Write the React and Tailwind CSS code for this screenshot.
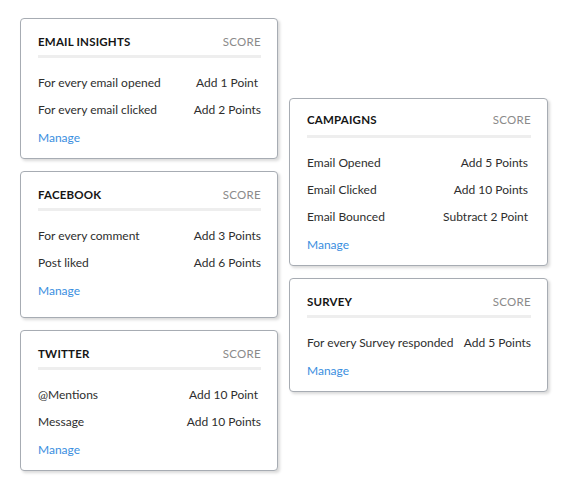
import React from "react";

function Card({ title, rows, extraBottom, wide, rowPad, tightTitle }) {
  return (
    <div
      className={`${wide ? "w-[259px]" : "w-[258px]"} bg-white border border-[#a7acb3] rounded-[4px] shadow-[2px_2px_3px_rgba(0,0,0,0.15)] pl-[17px] pr-[16px] ${
        tightTitle ? "pt-[13px]" : "pt-[15px]"
      } ${extraBottom ? "pb-[13px]" : "pb-[7px]"}`}
    >
      <div className="flex justify-between items-center h-[16px]">
        <span className="text-[11.5px] font-bold text-[#151515] tracking-[0.2px]">{title}</span>
        <span className="text-[11.5px] text-[#8a8a8a] tracking-[0.3px]">SCORE</span>
      </div>
      <div className={`${tightTitle ? "mt-[7px]" : "mt-[5px]"} h-[3px] bg-[#eeeeee]`} />
      <div className="mt-[11px]">
        {rows.map(([l, r, shift], i) => (
          <div
            key={i}
            className={`flex justify-between items-center h-[27px] text-[12px] text-[#2e2e2e] ${
              rowPad ? "pr-[3px]" : ""
            }`}
          >
            <span>{l}</span>
            <span className={shift ? "mr-[3px]" : ""}>{r}</span>
          </div>
        ))}
        <div className="mt-[1px] flex items-center h-[27px] text-[12px] text-[#3a8ee0]">Manage</div>
      </div>
    </div>
  );
}

export default function App() {
  return (
    <div
      className="min-h-[492px] bg-white pl-[20px] pt-[18px] flex gap-[11px] items-start"
      style={{ fontFamily: "Lato, 'Noto Sans', sans-serif" }}
    >
      <div className="flex flex-col gap-[12px]">
        <Card
          title="EMAIL INSIGHTS"
          rows={[
            ["For every email opened", "Add 1 Point", true],
            ["For every email clicked", "Add 2 Points"],
          ]}
        />
        <Card
          title="FACEBOOK"
          extraBottom
          rows={[
            ["For every comment", "Add 3 Points"],
            ["Post liked", "Add 6 Points"],
          ]}
        />
        <Card
          title="TWITTER"
          rows={[
            ["@Mentions", "Add 10 Point", true],
            ["Message", "Add 10 Points"],
          ]}
        />
      </div>
      <div className="flex flex-col gap-[12px] mt-[80px]">
        <Card
          wide
          rowPad
          tightTitle
          title="CAMPAIGNS"
          rows={[
            ["Email Opened", "Add 5 Points"],
            ["Email Clicked", "Add 10 Points"],
            ["Email Bounced", "Subtract 2 Point"],
          ]}
        />
        <Card wide title="SURVEY" rows={[["For every Survey responded", "Add 5 Points"]]} />
      </div>
    </div>
  );
}
